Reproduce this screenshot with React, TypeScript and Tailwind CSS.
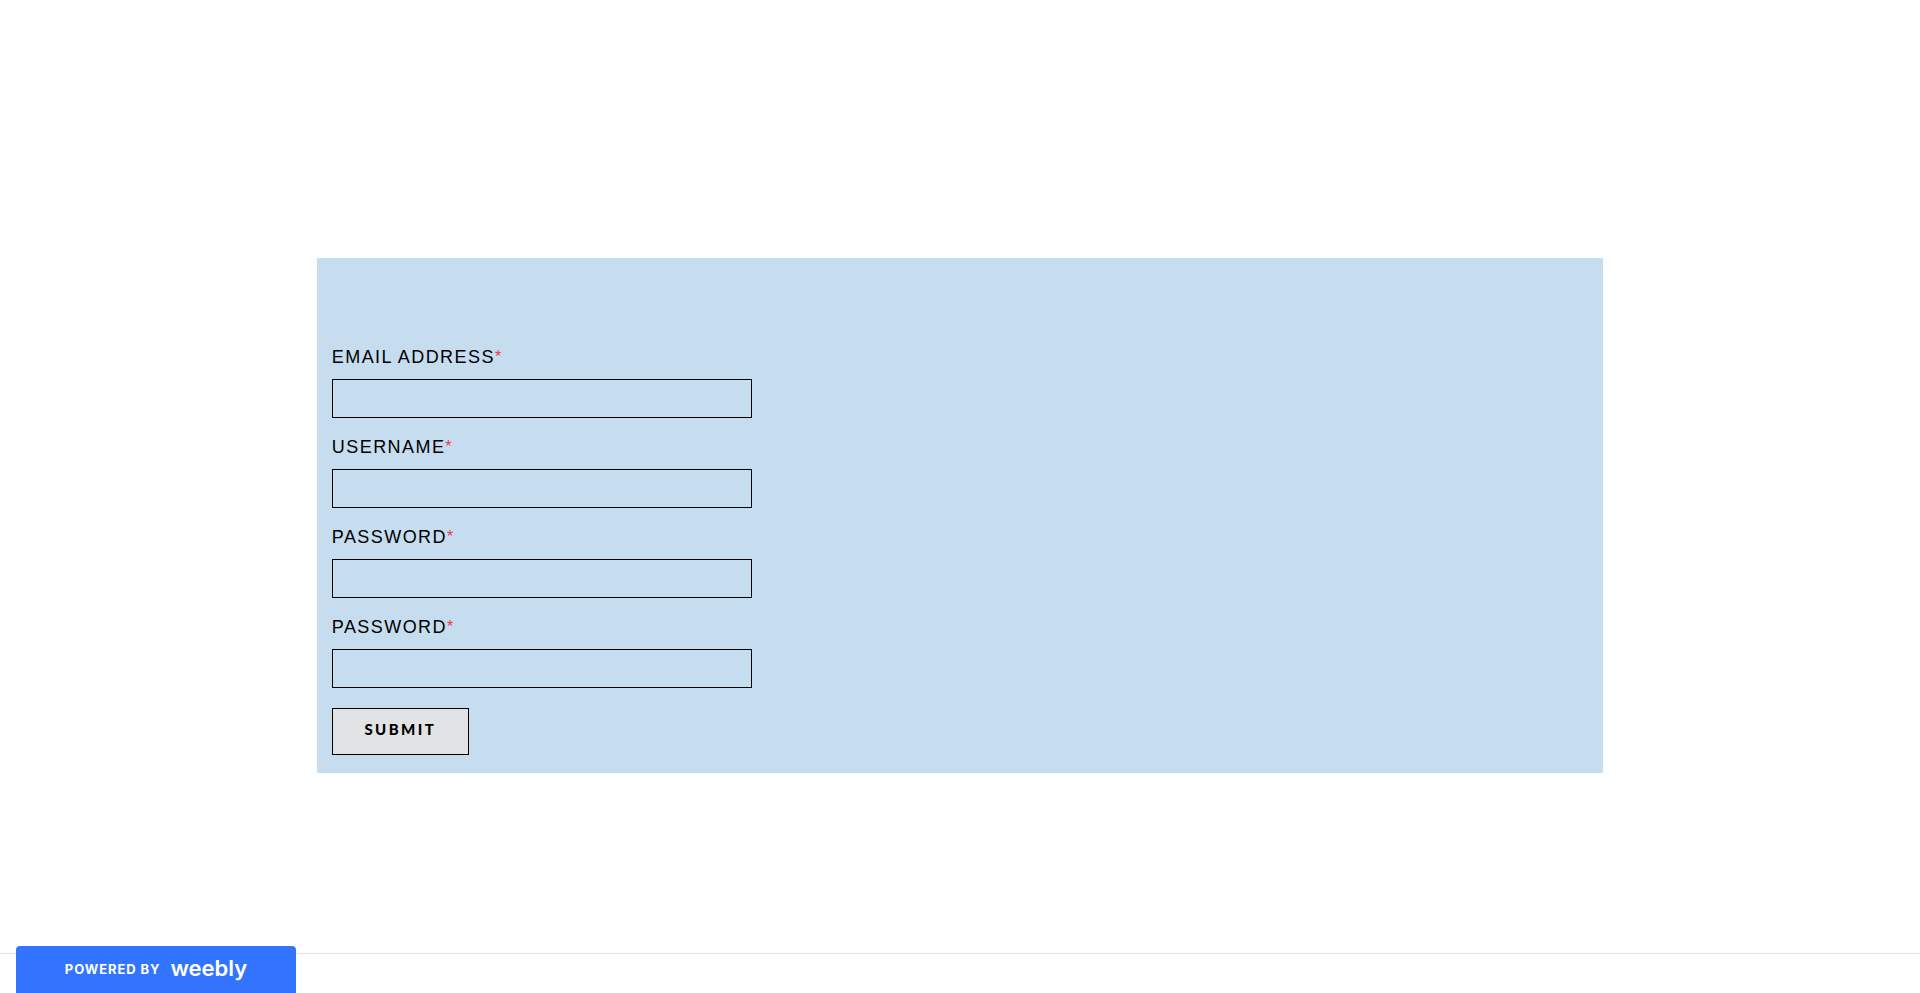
import React from "react";

type Field = { id: string; label: string; type: string };

const fields: Field[] = [
  { id: "email", label: "EMAIL ADDRESS", type: "email" },
  { id: "username", label: "USERNAME", type: "text" },
  { id: "password", label: "PASSWORD", type: "password" },
  { id: "password-confirm", label: "PASSWORD", type: "password" },
];

function FormField({ id, label, type }: Field) {
  return (
    <div className="mb-5 flex flex-col items-start">
      <label
        htmlFor={id}
        className="mb-[13px] flex h-[18px] items-center text-lg leading-none tracking-[0.08em] text-black"
      >
        {label}
        <span className="text-base leading-none tracking-normal text-[#f03a47]">*</span>
      </label>
      <input
        id={id}
        name={id}
        type={type}
        required
        className="h-[39px] w-full max-w-[420px] border border-black bg-transparent px-3 text-base shadow-none outline-none"
      />
    </div>
  );
}

export default function App() {
  return (
    <div className="flex min-h-screen flex-col bg-white font-['Liberation_Sans',Arial,sans-serif]">
      <main className="flex grow flex-col items-center pt-[258px]">
        <form
          className="w-[67%] bg-[#c6ddef] px-[15px] pt-[90px] pb-[18px]"
          onSubmit={(e) => e.preventDefault()}
        >
          {fields.map((field) => (
            <FormField key={field.id} {...field} />
          ))}
          <button
            type="submit"
            className="flex h-[47px] w-[137px] items-center justify-center border border-black bg-[#e2e3e4] pb-1 font-['Lato',sans-serif] text-[15px] font-black tracking-[0.16em] text-black"
          >
            SUBMIT
          </button>
        </form>
      </main>
      <footer className="h-10 border-t border-[#e3e3e3]">
        <a
          href="#"
          className="fixed bottom-0 left-4 flex h-[47px] w-[280px] items-center justify-center gap-[10px] rounded-t bg-[#3374ff] text-white"
        >
          <span className="font-['Inter',sans-serif] text-[13px] leading-none font-bold tracking-[0.07em]">
            POWERED BY
          </span>
          <span className="pb-1 font-['Inter',sans-serif] text-[22px] leading-none font-semibold">weebly</span>
        </a>
      </footer>
    </div>
  );
}
